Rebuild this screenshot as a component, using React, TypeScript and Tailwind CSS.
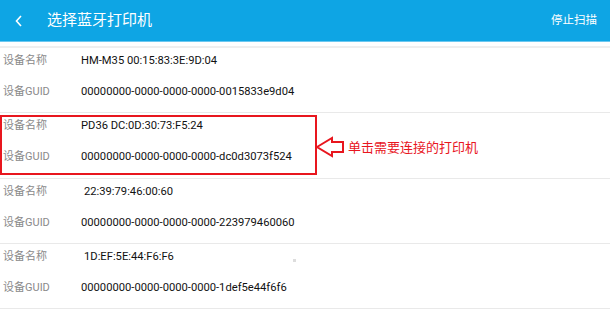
const devices = [
  { name: 'HM-M35 00:15:83:3E:9D:04', guid: '00000000-0000-0000-0000-0015833e9d04', pad: false },
  { name: 'PD36 DC:0D:30:73:F5:24', guid: '00000000-0000-0000-0000-dc0d3073f524', pad: false },
  { name: '22:39:79:46:00:60', guid: '00000000-0000-0000-0000-223979460060', pad: true },
  { name: '1D:EF:5E:44:F6:F6', guid: '00000000-0000-0000-0000-1def5e44f6f6', pad: true },
];

function DeviceRow({ name, guid, pad, tall }: { name: string; guid: string; pad: boolean; tall: boolean }) {
  return (
    <div className={`${tall ? 'h-[66px]' : 'h-[65px]'} border-b border-[#e9e9e9] flex flex-col`}>
      <div className="h-[22px] mt-[2px] flex items-center">
        <span className="w-[81px] pl-[3px] text-[11px] text-[#8a8a8a]">设备名称</span>
        <span className={`text-[11.2px] text-[#111] ${pad ? 'pl-[3px]' : ''}`}>{name}</span>
      </div>
      <div className="h-[22px] mt-[9px] flex items-center">
        <span className="w-[81px] pl-[3px] text-[11px] text-[#8a8a8a]">设备GUID</span>
        <span className="text-[11.2px] text-[#111]">{guid}</span>
      </div>
    </div>
  );
}

export default function App() {
  return (
    <div className="relative w-[610px] h-[310px] overflow-hidden bg-white font-['Roboto','Noto_Sans_CJK_SC',sans-serif]">
      {/* Header */}
      <div className="h-[42px] bg-[#0ea5e4] border-b border-[#6cc8f0] flex items-center">
        <svg className="ml-[14px]" width="10" height="14" viewBox="0 0 10 14">
          <polyline points="7,2 2.5,7 7,12" fill="none" stroke="white" strokeWidth="1.6" />
        </svg>
        <span className="ml-[23px] text-[15px] text-white">选择蓝牙打印机</span>
        <span className="ml-auto mr-[13px] text-[11.5px] text-white">停止扫描</span>
      </div>
      <div className="h-[4px]" />
      <div className="h-[2px] bg-[#efefef]" />

      {/* List */}
      {devices.map((d, i) => (
        <DeviceRow key={i} {...d} tall={i === 1} />
      ))}

      {/* Annotation */}
      <div className="absolute left-0 top-[115px] w-[317px] h-[60px] border-2 border-[#e8161e]" />
      <svg className="absolute left-[315px] top-[136px]" width="30" height="22" viewBox="0 0 30 22">
        <polygon points="2,11 17,2 17,6 28,6 28,16 17,16 17,20" fill="none" stroke="#e8161e" strokeWidth="2" strokeLinejoin="miter" />
      </svg>
      <span className="absolute left-[348px] top-[137px] text-[13px] text-[#e8161e] font-['Noto_Sans_CJK_SC',sans-serif]">
        单击需要连接的打印机
      </span>
      <div className="absolute left-[293px] top-[259px] w-[3px] h-[3px] bg-[#dddddd]" />
    </div>
  );
}
